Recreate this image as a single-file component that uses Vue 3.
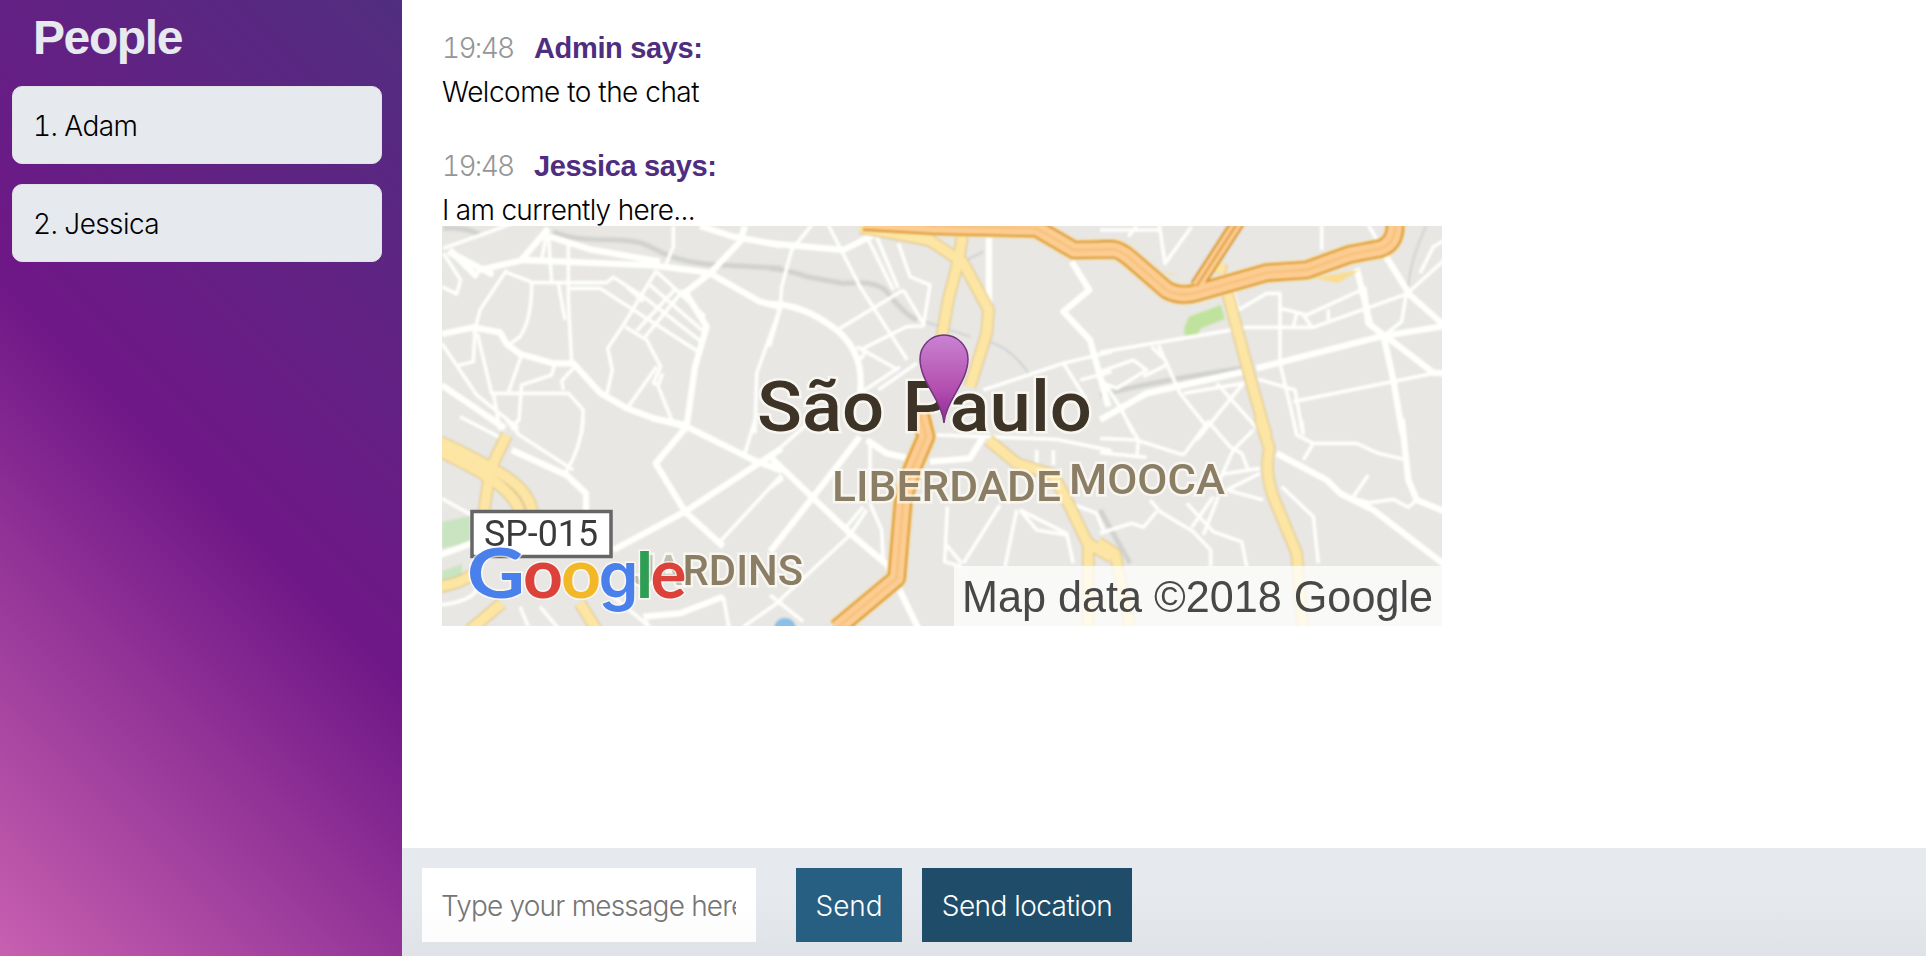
<script setup>
const people = ['Adam', 'Jessica']

// Each map tile carries its own origin; path units are thirds of a pixel.
const tiles = [
  {
    x: -2, y: -6,
    rail: ['M340 35C420 75 560 45 620 75S700 120 800 132L1025 145', 'M10 25Q80 20 120 45'],
    wide: [
      'M110 152L250 120L640 136L805 158', 'M330 50L450 88L660 125', 'M780 18L880 50L1025 76',
      'M730 222L810 160L900 65L915 18', 'M810 160L960 245L1025 262', 'M30 90L112 172', 'M25 95L160 165',
      'M240 125L325 25', 'M5 342L100 322L180 337L200 372L240 402L340 430L400 430L480 518L560 565L640 595L745 617',
      'M735 215L800 320L765 440L738 632', 'M5 495L195 625'
    ],
    thin: [
      'M10 85L150 35L220 8', 'M200 150L120 270L102 340', 'M195 155L280 188L500 188L520 172L610 230',
      'M275 190Q275 300 240 350L205 375', 'M385 70V240L395 430', 'M318 50L305 120', 'M325 40L335 185',
      'M355 190L375 300', 'M385 205H480L770 392', 'M650 150L550 315L503 385L517 450L500 525',
      'M650 155L795 290', 'M630 195L788 332', 'M600 222L780 362', 'M560 200L610 245', 'M730 210L612 355',
      'M705 208L590 332', 'M555 320L620 360L662 440L640 490L655 495L668 460', 'M655 500L700 612',
      'M650 440L565 560', 'M1018 270L950 460L945 640', 'M5 370L110 525L235 625', 'M112 340L155 520H385L430 570L425 640',
      'M245 405L205 518', 'M245 495L335 465L345 430', 'M245 490L237 600L215 620', 'M370 510L365 482L400 445',
      'M55 436L100 425L105 330', 'M10 100L62 180L50 222L5 200', 'M160 520L180 630', 'M700 18V80L675 140'
    ]
  },
  {
    x: 328, y: -6,
    rail: ['M0 145Q60 150 110 170L220 190Q320 180 350 215Q400 280 440 300'],
    wide: ['M0 70L220 90L310 45', 'M0 252Q100 252 200 330Q285 400 270 520', 'M657 50V260', 'M905 125L958 210L880 275L960 360L985 450L1015 560'],
    thin: [
      'M125 15L65 90L35 200L30 270L-2 380', 'M175 15L270 200L315 270L412 420', 'M295 60L370 210', 'M320 50L385 205',
      'M385 70L420 170L480 195L460 318L410 320L270 390', 'M400 210L210 325', 'M400 210L460 310', 'M260 380L385 450',
      'M325 510L440 430', 'M640 510L880 430L1025 395', 'M880 430L950 540', 'M930 480L1025 455', 'M290 390L270 420', 'M270 520L390 440'
    ],
    stream: ['M465 305L600 350', 'M660 365Q730 390 775 460', 'M640 95L590 120'],
    yellow: ['M270 22Q400 45 480 62L565 118', 'M578 40L568 110L535 240L510 380', 'M575 120L656 270L650 340L600 500'],
    orange: ['M280 5L500 18L800 25L912 90L1030 88']
  },
  {
    x: 658, y: -6,
    rail: ['M0 525Q200 475 430 445'],
    stream: ['M980 15Q930 120 925 200'],
    wide: [
      'M0 600L140 520L430 455', 'M470 445L840 350L1035 318', 'M770 145L810 310', 'M790 200L805 310L850 345L880 480L907 640',
      'M855 105L930 225L1035 318', 'M860 350L1000 458L1035 460', 'M395 210L410 270'
    ],
    thin: [
      'M0 397L440 322L640 322L920 222L1035 118', 'M415 270L500 220H540V430L590 640', 'M580 545L1000 460',
      'M475 478L585 510L608 640', 'M540 265L620 285L780 212', 'M590 280L580 320', 'M610 285L635 320', 'M685 268V300',
      'M918 225L905 305L860 340', 'M175 375L240 520L320 620', 'M155 380L190 415', 'M250 520L430 490L290 660', 'M350 490L485 640',
      'M0 470L60 560L100 640', 'M0 455L100 420L140 450L50 505L0 485', 'M200 435L130 470', 'M178 15L195 130L275 20',
      'M665 15V90', 'M805 15L860 110', 'M1035 60L1000 80L960 160', 'M85 50L110 18', 'M0 30L180 30'
    ],
    yellow: ['M365 130L358 160', 'M382 215L412 330L455 490L500 650'],
    orange: ['M0 88H40Q60 90 90 115L200 210Q240 232 290 218L500 158L620 150L750 103L840 86Q890 70 885 5'],
    branch: ['M290 198L415 5']
  },
  {
    x: -2, y: 194,
    wide: [
      'M215 90L380 165L438 220V280', 'M640 -5L740 20L940 120L1025 152', 'M740 20L647 130L735 275L850 380',
      'M520 390L735 275L1025 85', 'M610 590L720 580L850 530', 'M0 405L95 370'
    ],
    thin: [
      'M60 -10L185 55', 'M200 0L235 40', 'M230 40L400 150', 'M430 0Q420 90 378 155', 'M840 365L1025 165', 'M945 0L915 100',
      'M5 235L95 285', 'M850 530L868 630', 'M240 560L265 620', 'M300 560L355 625', 'M0 555Q90 545 110 510', 'M520 530L640 630',
      'M910 620L1025 540', 'M235 0L215 30', 'M620 600V630'
    ],
    yellow: ['M0 65Q110 115 190 165T278 280', 'M0 95Q110 145 170 190T240 280', 'M200 45L150 150L132 275', 'M0 500Q60 490 95 465', 'M185 550L90 630', 'M420 550L470 630']
  },
  {
    x: 328, y: 194,
    wide: ['M-5 105L240 340L352 435L445 625', 'M270 50L130 230L0 395', 'M290 60L350 100L440 120', 'M480 125L600 115L640 50'],
    thin: [
      'M130 -5L-5 115', 'M500 45L860 58L1025 92', 'M532 260L524 425L575 440', 'M525 370L575 430', 'M690 255L580 430', 'M740 270L705 440',
      'M750 270L890 340L910 430', 'M750 270L800 330L890 345', 'M30 540L240 345L290 270', 'M300 250L335 330L340 425', 'M0 525L100 605',
      'M800 90V135', 'M850 90V135', 'M900 250L980 280L1000 330', 'M0 205L40 175', 'M300 60V240', 'M225 325L280 260'
    ],
    yellow: ['M655 60L740 130L850 165L900 260L955 375V620', 'M955 370L1025 412'],
    orange: ['M445 -40L468 50L425 150L400 240L380 475L200 625']
  },
  {
    x: 658, y: 194,
    rail: ['M0 270L90 430'],
    wide: ['M530 100L680 180L720 220L820 270L1035 435', 'M905 -5L925 180L950 240L1035 275'],
    thin: [
      'M0 55L110 60L250 105', 'M80 0L115 60L110 115', 'M250 105L325 5L390 80L425 100L445 150', 'M460 30L400 90L350 200',
      'M370 162L480 145', 'M380 210L480 160', 'M380 210L490 240', 'M0 98L140 112', 'M580 0L590 45L640 70H770L835 100L910 118',
      'M605 0L610 45', 'M640 70L610 120', 'M760 230L805 165', 'M740 230L810 248L880 238L925 262L950 240', 'M545 200L640 290L655 430',
      'M0 340L95 310L130 322L170 275', 'M150 240L180 275L280 335L332 390V440', 'M260 250L340 335L425 365L440 440',
      'M275 322L340 230', 'M310 345L355 230'
    ],
    yellow: ['M478 -10L508 85Q490 170 532 260L590 400L610 640', 'M-5 368L45 400L90 620']
  }
]
const place = t => `translate(${t.x} ${t.y}) scale(.33333)`

const strokes = [
  ['rail', 'rail'], ['stream', 'stream'], ['thin', 'thin'], ['wide', 'wide'],
  ['yellow', 'yellow-edge'], ['yellow', 'yellow-fill'],
  ['orange', 'orange-glow'], ['orange', 'orange-edge'], ['branch', 'branch-edge'],
  ['orange', 'orange-fill'], ['branch', 'branch-fill'], ['orange', 'orange-line'], ['branch', 'branch-line']
]
const logo = [
  ['G', 25, '#4a80ec', 58, 'geo'], ['o', 81, '#dc4239', 40, 'geo'], ['o', 119, '#f3b827', 40, 'geo'],
  ['g', 156.5, '#4a80ec', 40, 'grot'], ['l', 193.5, '#2f9e55', 18, 'grot'], ['e', 208.5, '#dc4239', 36, 'geo']
]
</script>

<template>
  <div class="chat">
    <aside class="sidebar">
      <h3>People</h3>
      <ol class="people">
        <li v-for="(p, i) in people" :key="p">{{ i + 1 }}. {{ p }}</li>
      </ol>
    </aside>
    <main class="main">
      <section class="messages">
        <article class="message">
          <header><span class="time">19:48</span><h4>Admin says:</h4></header>
          <p>Welcome to the chat</p>
        </article>
        <article class="message">
          <header><span class="time">19:48</span><h4>Jessica says:</h4></header>
          <p class="tight">I am currently here...</p>
          <svg class="map" viewBox="0 0 1000 400" width="1000" height="400">
            <defs>
              <linearGradient id="pin" x1="0" y1="0" x2="0" y2="1">
                <stop offset="0" stop-color="#c983d1" />
                <stop offset=".6" stop-color="#b450b0" />
                <stop offset="1" stop-color="#8d2a96" />
              </linearGradient>
            </defs>
            <rect width="1000" height="400" fill="#e8e7e4" />
            <g class="soft">
              <path d="M744 101L748 92L778 81L781 92L758 101L754 108H744Z" fill="#bfe39d" stroke="#bfe39d" stroke-width="3" />
              <path d="M0 296L28 290V318L0 322ZM0 345L20 338V350L0 358Z" fill="#c9e4c0" />
              <circle cx="343" cy="403" r="11" fill="#8bbfe8" />
              <g v-for="[key, cls] in strokes" :key="cls" :class="['road', cls]">
                <g v-for="(t, i) in tiles" :key="i" :transform="place(t)">
                  <path v-for="d in t[key] || []" :key="d" :d="d" />
                </g>
              </g>
              <path d="M871 52L896 57L918 44Z" fill="#fadc8e" />
              <path d="M719 44L738 50L728 48Z" fill="#fadc8e" />
            </g>
            <g class="labels">
              <text class="city" x="315" y="205" textLength="335" lengthAdjust="spacingAndGlyphs">São Paulo</text>
              <text class="area" x="390" y="275" textLength="229" lengthAdjust="spacingAndGlyphs">LIBERDADE</text>
              <text class="area" x="627" y="268" textLength="156" lengthAdjust="spacingAndGlyphs">MOOCA</text>
              <text class="area" x="190" y="359" textLength="171" lengthAdjust="spacingAndGlyphs"><tspan class="faint">JA</tspan>RDINS</text>
              <rect x="30" y="285.5" width="139" height="45" fill="#fff" stroke="#666" stroke-width="3.5" />
              <text class="route" x="42" y="320" textLength="114" lengthAdjust="spacingAndGlyphs">SP-015</text>
              <g class="logo">
                <text v-for="([c, x, f, w, face], i) in logo" :key="i" :class="face" :x="x" y="371.5" :fill="f" :textLength="w" lengthAdjust="spacingAndGlyphs">{{ c }}</text>
              </g>
              <path d="M502 197C500 174 478 156 478 133A24 24 0 0 1 526 133C526 156 504 174 502 197Z" fill="url(#pin)" stroke="#743480" stroke-width="1.5" />
              <rect x="512" y="340" width="488" height="60" fill="#fff" fill-opacity=".75" />
              <text class="credit" x="520" y="385.5" textLength="471" lengthAdjust="spacingAndGlyphs">Map data ©2018 Google</text>
            </g>
          </svg>
        </article>
      </section>
      <form class="footer" @submit.prevent>
        <input type="text" placeholder="Type your message here" />
        <button class="send">Send</button>
        <button class="location" type="button">Send location</button>
      </form>
    </main>
  </div>
</template>

<style>
html, body { margin: 0; overflow: hidden; }
</style>
<style scoped>
* { box-sizing: border-box; margin: 0; padding: 0; }
.chat { display: flex; height: 956px; font: 300 28px/44px Inter, "Liberation Sans", sans-serif; letter-spacing: -.5px; color: #000; white-space: nowrap; }
.sidebar { width: 402px; flex: none; padding: 0 20px 0 12px; background: linear-gradient(45deg, #c860b0 0%, #6f1787 50%, #512e7f 100%); }
h3 { font: 700 48px/56px "Liberation Sans", sans-serif; letter-spacing: -1.4px; color: #e6eaee; padding: 10px 0 0 21px; height: 86px; }
.people { list-style: none; display: flex; flex-direction: column; gap: 20px; }
.people li { height: 78px; padding: 0 20px; line-height: 79px; border-radius: 10px; background: #e6eaee; border: 1px solid #e1e2e4; font-feature-settings: "tnum"; letter-spacing: -.6px; }
.main { flex: 1; min-width: 0; display: flex; flex-direction: column; background: #fff; }
.messages { flex: 1; padding: 26px 40px 0; }
.message { margin-bottom: 30px; }
.message header { display: flex; height: 44px; }
.message p { height: 44px; letter-spacing: -.5px; }
.message .tight { letter-spacing: -.7px; }
.time { width: 92px; color: #969696; letter-spacing: -1.7px; font-feature-settings: "tnum"; }
h4 { font: 700 29px/44px "Liberation Sans", sans-serif; color: #4f2d7f; letter-spacing: -.35px; }
.map { display: block; margin-top: -6px; position: relative; }
.footer { height: 108px; flex: none; padding: 20px; display: flex; align-items: flex-start; background: linear-gradient(#e6eaee 40%, #dfe2e7); }
input { width: 334px; height: 74px; padding: 1px 20px 0 19px; border: 0; border-right: 0; margin-right: 40px; background: linear-gradient(#fff 50%, #fcfcfd); font: inherit; letter-spacing: -.8px; }
input::placeholder { color: #757575; opacity: 1; }
button { height: 74px; border: 0; font: inherit; font-weight: 350; color: #fff; padding-top: 1px; letter-spacing: -.55px; }
.send { width: 106px; background: #265f82; margin-right: 20px; letter-spacing: -.1px; }
.location { width: 210px; background: #1f4c68; }
.soft { filter: blur(.9px); }
.labels { filter: blur(.5px); }
.road { fill: none; stroke-linejoin: round; }
.rail { stroke: #d1d1cf; stroke-width: 15; }
.stream { stroke: #c9cdcf; stroke-width: 5; }
.thin { stroke: #fefefc; stroke-width: 11; }
.wide { stroke: #fffffc; stroke-width: 19; }
.yellow-edge { stroke: #dfc588; stroke-width: 37; }
.yellow-fill { stroke: #fde6a4; stroke-width: 30; }
.orange-glow { stroke: #fbdc98; stroke-width: 62; }
.orange-edge { stroke: #d4932c; stroke-width: 54; }
.orange-fill { stroke: #fdcc90; stroke-width: 43; }
.orange-line { stroke: #f0ba72; stroke-width: 4; }
.branch-edge { stroke: #d4932c; stroke-width: 42; }
.branch-fill { stroke: #fdcc90; stroke-width: 30; }
.branch-line { stroke: #dc9f45; stroke-width: 6; }
text { font-family: Roboto, sans-serif; letter-spacing: 0; paint-order: stroke; stroke: #fffdf6; stroke-opacity: .65; stroke-width: 5px; }
.city { font-size: 70px; font-weight: 500; fill: #3d3427; }
.area { font-size: 43px; font-weight: 500; fill: #8b7e64; }
.faint { fill: #c3bdaf; }
.route { font-size: 37px; font-weight: 400; fill: #3a3a3a; stroke: none; }
.credit { font-family: "Liberation Sans", sans-serif; font-size: 45px; font-weight: 400; fill: #484848; stroke: none; }
.logo text { font-size: 69px; font-weight: 700; stroke: #fff; stroke-width: 3px; }
.logo .geo { font-family: Lato, sans-serif; }
.logo .grot { font-family: Inter, sans-serif; font-size: 64px; font-weight: 600; }
</style>
